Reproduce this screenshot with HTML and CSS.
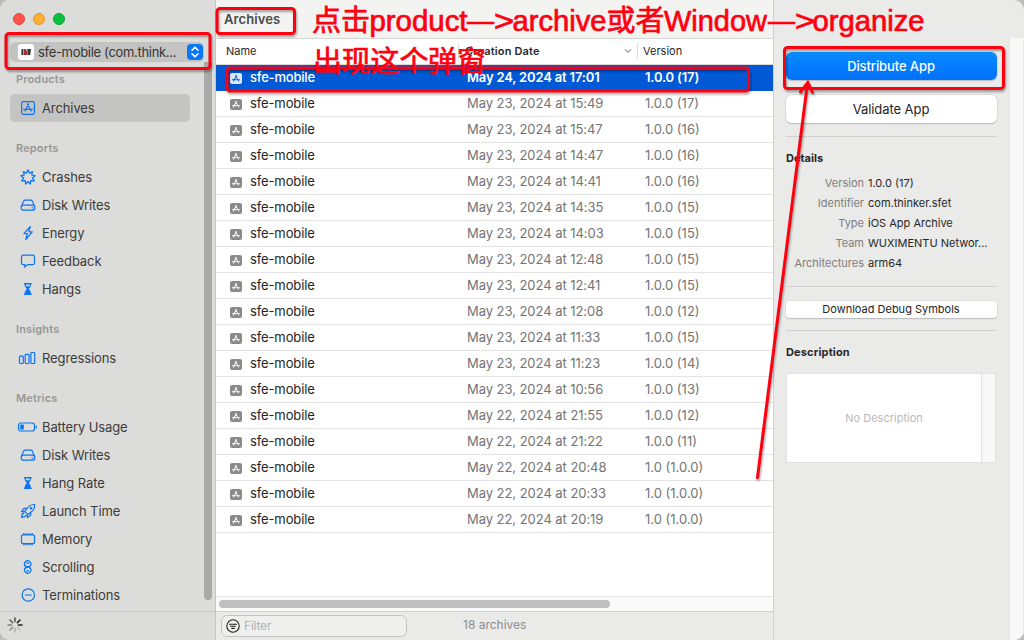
FILE: index.html
```html
<!DOCTYPE html>
<html lang="en">
<head>
<meta charset="utf-8">
<title>Archives</title>
<link rel="stylesheet" href="styles.css">
</head>
<body>
<svg class="defs" aria-hidden="true">
  <symbol id="app" viewBox="0 0 16 16"><rect x="1.6" y="1.6" width="12.8" height="12.8" rx="1.8"/><path d="M8.6 4 5 11M7.4 4l3.7 7M3.6 9.3h5.2M10.4 9.3h2"/></symbol>
  <symbol id="archive" viewBox="0 0 12 12"><rect width="12" height="11" rx="2" fill="currentColor"/><path class="mark" d="M6.4 2.3 3.4 8.4M5.6 2.3l3 6.1M2.1 6.7h4.6M8.3 6.7h1.6"/></symbol>
  <symbol id="crash" viewBox="0 0 16 16"><path d="m8 .8 1.5 3.4 3.1-1.6-.9 3.3 3.6.9-3 2.1 2 3-3.6-.3-.4 3.5L8 12.5l-2.3 2.6-.4-3.5-3.6.3 2-3-3-2.1 3.6-.9-.9-3.3 3.1 1.6z"/></symbol>
  <symbol id="disk" viewBox="0 0 16 16"><path d="M1.4 9.3 3.6 4.2Q4 3.1 5.1 3.1h5.8q1.1 0 1.5 1.1l2.2 5.1"/><rect x="1.2" y="8.2" width="13.6" height="5" rx="2.3"/><path d="M12 10.8h.8"/></symbol>
  <symbol id="bolt" viewBox="0 0 16 16"><path d="M10.3 1.5 3.9 8.7h3.5l-1.6 5.8 6.5-7.7H8.8z"/></symbol>
  <symbol id="chat" viewBox="0 0 16 16"><path d="M3.3 2.2h9.4q1.8 0 1.8 1.8v5.8q0 1.8-1.8 1.8H7.6L4.8 14v-2.4H3.3q-1.8 0-1.8-1.8V4q0-1.8 1.8-1.8z"/></symbol>
  <symbol id="glass" viewBox="0 0 16 16"><path class="solid" d="M4 2h7.6v1.5h-.7c0 2.4-1.2 3.2-2.1 4.5.9 1.3 2.1 2.1 2.1 4.4h.7V14H4v-1.6h.7c0-2.3 1.2-3.1 2.1-4.4-.9-1.3-2.1-2.1-2.1-4.5H4z"/><path class="hole" d="M5.8 3.6h4q0 1-.5 1.7h-3q-.5-.7-.5-1.7z"/></symbol>
  <symbol id="bars" viewBox="0 0 18 16"><rect x="1.5" y="6.1" width="3.8" height="7.4" rx=".8"/><rect x="7.2" y="4.3" width="3.8" height="9.2" rx=".8"/><rect x="12.9" y="2.5" width="3.8" height="11" rx=".8"/></symbol>
  <symbol id="battery" viewBox="0 0 20 16"><rect x="1.500" y="4" width="16" height="8" rx="2.2"/><rect class="solid" x="3.200" y="5.6" width="3.6" height="4.8" rx=".6"/><path d="M19.200 7v2"/></symbol>
  <symbol id="rocket" viewBox="0 0 16 16"><path d="M14.6 1.5C10.6 1.2 7.4 3.8 4.8 8.6l2.7 2.8c4.6-2.3 7.5-5.6 7.1-9.9zM7 5.3H4L1.5 8.7l3.3-.1M10.8 9.2v2.9l-3.4 2.5.1-3.2M3.8 10.2Q1.6 10.8 1.7 14.4q3.2 0 4.4-2"/><circle class="solid" cx="11" cy="5.2" r="1.2"/></symbol>
  <symbol id="memory" viewBox="0 0 16 16"><rect x="1.5" y="3.8" width="13" height="8.8" rx="1.4"/><path d="M3.8 2.500v1M5.9 2.500v1M8 2.500v1M10.1 2.500v1M12.2 2.500v1M3.8 12.8v1M5.9 12.8v1M8 12.8v1M10.1 12.8v1M12.2 12.8v1"/></symbol>
  <symbol id="scroll" viewBox="0 0 16 16"><path d="M5.2 7.1A3.2 3.2 0 1 1 10.2 7M5.2 9A3.2 3.2 0 1 0 10.2 9"/><path d="m4.8 6.5 3 2.1 2.7-2.1M4.8 9.5l3-2.1 2.7 2.1M6.6 4.2h2M6.6 11.8h2"/></symbol>
  <symbol id="minus" viewBox="0 0 16 16"><circle cx="8.3" cy="8" r="6.2"/><path d="M5.3 8h6"/></symbol>
</svg>
<div class="window">
  <aside class="sidebar">
    <div class="lights"><i class="red"></i><i class="amber"></i><i class="green"></i></div>
    <div class="picker">
      <svg class="logo" viewBox="0 0 16 16"><rect width="16" height="16" rx="3" fill="#fff"/><path d="M3.500 5h2L4.900 11H3.300zM10.200 5h2.800l-.8 6h-2.800z" fill="#333"/><path d="M6 5h1.800l.6 2.6L9 5h1l-.8 6H5.300z" fill="#a92c30"/></svg>
      <span class="picker-name">sfe-mobile (com.think...</span>
      <svg class="stepper" viewBox="0 0 16 16"><rect width="16" height="16" rx="4"/><path d="m5 6.2 3-3 3 3M5 9.8l3 3 3-3"/></svg>
    </div>
    <nav class="nav">
      <h2 class="first">Products</h2>
      <a class="item current"><svg><use href="#app"/></svg><span>Archives</span></a>
      <h2>Reports</h2>
      <a class="item"><svg><use href="#crash"/></svg><span>Crashes</span></a>
      <a class="item"><svg><use href="#disk"/></svg><span>Disk Writes</span></a>
      <a class="item"><svg><use href="#bolt"/></svg><span>Energy</span></a>
      <a class="item"><svg><use href="#chat"/></svg><span>Feedback</span></a>
      <a class="item"><svg><use href="#glass"/></svg><span>Hangs</span></a>
      <h2>Insights</h2>
      <a class="item"><svg class="w18"><use href="#bars"/></svg><span>Regressions</span></a>
      <h2>Metrics</h2>
      <a class="item"><svg class="w20"><use href="#battery"/></svg><span>Battery Usage</span></a>
      <a class="item"><svg><use href="#disk"/></svg><span>Disk Writes</span></a>
      <a class="item"><svg><use href="#glass"/></svg><span>Hang Rate</span></a>
      <a class="item"><svg><use href="#rocket"/></svg><span>Launch Time</span></a>
      <a class="item"><svg><use href="#memory"/></svg><span>Memory</span></a>
      <a class="item"><svg><use href="#scroll"/></svg><span>Scrolling</span></a>
      <a class="item"><svg><use href="#minus"/></svg><span>Terminations</span></a>
      <div class="side-thumb"></div>
    </nav>
    <div class="side-foot">
      <svg class="spinner" viewBox="-8 -8 16 16"><path d="M0-3.4V-7" opacity=".75"/><path d="m2.4-2.4 2.6-2.6"/><path d="M3.4 0H7"/><path d="m2.4 2.4 2.6 2.6" opacity=".15"/><path d="M0 3.4V7" opacity=".25"/><path d="m-2.4 2.4-2.6 2.6" opacity=".4"/><path d="M-3.4 0H-7" opacity=".5"/><path d="m-2.4-2.4-2.6-2.6" opacity=".65"/></svg>
    </div>
  </aside>
  <main class="main">
    <header class="title">Archives</header>
    <div class="columns"><span class="c-name">Name</span><span class="c-date">Creation Date<svg viewBox="0 0 8 6"><path d="m1 1.3 3 3 3-3"/></svg></span><span class="c-version">Version</span></div>
    <div class="rows">
      <div class="row selected"><svg><use href="#archive"/></svg><span class="n">sfe-mobile</span><span class="d">May 24, 2024 at 17:01</span><span class="v">1.0.0 (17)</span></div>
      <div class="row"><svg><use href="#archive"/></svg><span class="n">sfe-mobile</span><span class="d">May 23, 2024 at 15:49</span><span class="v">1.0.0 (17)</span></div>
      <div class="row"><svg><use href="#archive"/></svg><span class="n">sfe-mobile</span><span class="d">May 23, 2024 at 15:47</span><span class="v">1.0.0 (16)</span></div>
      <div class="row"><svg><use href="#archive"/></svg><span class="n">sfe-mobile</span><span class="d">May 23, 2024 at 14:47</span><span class="v">1.0.0 (16)</span></div>
      <div class="row"><svg><use href="#archive"/></svg><span class="n">sfe-mobile</span><span class="d">May 23, 2024 at 14:41</span><span class="v">1.0.0 (16)</span></div>
      <div class="row"><svg><use href="#archive"/></svg><span class="n">sfe-mobile</span><span class="d">May 23, 2024 at 14:35</span><span class="v">1.0.0 (15)</span></div>
      <div class="row"><svg><use href="#archive"/></svg><span class="n">sfe-mobile</span><span class="d">May 23, 2024 at 14:03</span><span class="v">1.0.0 (15)</span></div>
      <div class="row"><svg><use href="#archive"/></svg><span class="n">sfe-mobile</span><span class="d">May 23, 2024 at 12:48</span><span class="v">1.0.0 (15)</span></div>
      <div class="row"><svg><use href="#archive"/></svg><span class="n">sfe-mobile</span><span class="d">May 23, 2024 at 12:41</span><span class="v">1.0.0 (15)</span></div>
      <div class="row"><svg><use href="#archive"/></svg><span class="n">sfe-mobile</span><span class="d">May 23, 2024 at 12:08</span><span class="v">1.0.0 (12)</span></div>
      <div class="row"><svg><use href="#archive"/></svg><span class="n">sfe-mobile</span><span class="d">May 23, 2024 at 11:33</span><span class="v">1.0.0 (15)</span></div>
      <div class="row"><svg><use href="#archive"/></svg><span class="n">sfe-mobile</span><span class="d">May 23, 2024 at 11:23</span><span class="v">1.0.0 (14)</span></div>
      <div class="row"><svg><use href="#archive"/></svg><span class="n">sfe-mobile</span><span class="d">May 23, 2024 at 10:56</span><span class="v">1.0.0 (13)</span></div>
      <div class="row"><svg><use href="#archive"/></svg><span class="n">sfe-mobile</span><span class="d">May 22, 2024 at 21:55</span><span class="v">1.0.0 (12)</span></div>
      <div class="row"><svg><use href="#archive"/></svg><span class="n">sfe-mobile</span><span class="d">May 22, 2024 at 21:22</span><span class="v">1.0.0 (11)</span></div>
      <div class="row"><svg><use href="#archive"/></svg><span class="n">sfe-mobile</span><span class="d">May 22, 2024 at 20:48</span><span class="v">1.0 (1.0.0)</span></div>
      <div class="row"><svg><use href="#archive"/></svg><span class="n">sfe-mobile</span><span class="d">May 22, 2024 at 20:33</span><span class="v">1.0 (1.0.0)</span></div>
      <div class="row"><svg><use href="#archive"/></svg><span class="n">sfe-mobile</span><span class="d">May 22, 2024 at 20:19</span><span class="v">1.0 (1.0.0)</span></div>
    </div>
    <div class="hscroll"><div class="hthumb"></div></div>
    <footer class="foot">
      <div class="filter"><svg viewBox="0 0 14 14"><circle cx="7" cy="7" r="6.2"/><path d="M3.5 5.2h7M4.6 7.3h4.8M5.8 9.4h2.4"/></svg><span>Filter</span></div>
      <span class="count">18 archives</span>
    </footer>
  </main>
  <section class="inspector">
    <div class="panel">
      <button class="btn primary">Distribute App</button>
      <button class="btn validate">Validate App</button>
      <hr class="rule">
      <h3 class="details-title">Details</h3>
      <dl class="details">
        <dt>Version</dt><dd>1.0.0 (17)</dd>
        <dt>Identifier</dt><dd>com.thinker.sfet</dd>
        <dt>Type</dt><dd>iOS App Archive</dd>
        <dt>Team</dt><dd>WUXIMENTU Networ...</dd>
        <dt>Architectures</dt><dd>arm64</dd>
      </dl>
      <hr class="rule">
      <button class="btn small">Download Debug Symbols</button>
      <hr class="rule last">
      <h3 class="desc-title">Description</h3>
      <div class="desc"><span>No Description</span><i></i></div>
    </div>
    <div class="gutter"></div>
  </section>
  <svg class="notes" viewBox="0 0 1024 640">
    <g class="strokes">
      <rect x="6" y="33.500" width="204" height="35" rx="3"/>
      <rect x="217" y="8.500" width="77.500" height="25" rx="3"/>
      <rect x="227" y="68" width="521.500" height="23" rx="3"/>
      <rect x="784.500" y="47.500" width="219" height="41" rx="3"/>
      <path d="M757.500 477.500 807.500 83M800.500 92l7.300-9.500 4.700 9.800"/>
    </g>
    <g class="words">
      <text x="312" y="31" textLength="58">点击</text><text x="369.500" y="31" textLength="98" lengthAdjust="spacingAndGlyphs">product</text><text x="467" y="31" textLength="27" lengthAdjust="spacingAndGlyphs">—</text><text x="494" y="31" textLength="20" lengthAdjust="spacingAndGlyphs">&gt;</text><text x="512.500" y="31" textLength="94" lengthAdjust="spacingAndGlyphs">archive</text><text x="606.500" y="31" textLength="58">或者</text><text x="664" y="31" textLength="103" lengthAdjust="spacingAndGlyphs">Window</text><text x="768" y="31" textLength="27" lengthAdjust="spacingAndGlyphs">—</text><text x="795" y="31" textLength="20" lengthAdjust="spacingAndGlyphs">&gt;</text><text x="812.500" y="31" textLength="112" lengthAdjust="spacingAndGlyphs">organize</text>
      <text x="313" y="72" textLength="173">出现这个弹窗</text>
    </g>
  </svg>
</div>
</body>
</html>
```
FILE: styles.css
```css
* { box-sizing: border-box; }
body { margin: 0; background: #bdbdbd; font-family: Inter, "Noto Sans CJK SC", sans-serif; font-size: 13px; color: #272727; }
.defs { position: absolute; width: 0; height: 0; }
.window { position: relative; display: flex; width: 1024px; height: 640px; overflow: hidden; border-radius: 10px; background: #eaeae9; }

.sidebar { display: flex; flex-direction: column; width: 216px; flex: none; background: #dcdcda; border-right: 1px solid #c4c4c2; }
.lights { display: flex; gap: 8px; padding: 13px 0 0 13px; height: 42px; flex: none; }
.lights i { width: 12px; height: 12px; border-radius: 50%; border: 1px solid #dd4742; background: #fe514e; }
.lights .amber { background: #fdb035; border-color: #dc952a; }
.lights .green { background: #0bc03f; border-color: #0ca338; }
.picker { display: flex; align-items: center; height: 20px; width: 194px; margin-left: 10px; padding: 0 1px 0 8px; background: #c3c3c1; border-radius: 5px; flex: none; }
.logo { width: 16px; height: 16px; margin-right: 4px; }
.picker-name { flex: 1; white-space: nowrap; color: #353535; letter-spacing: -.31px; }
.stepper { width: 16px; height: 16px; }
.stepper rect { fill: #0878f6; }
.stepper path { fill: none; stroke: #fff; stroke-width: 1.6; stroke-linecap: round; stroke-linejoin: round; }
.nav { position: relative; flex: 1; padding-left: 10px; }
.nav h2 { margin: 0; height: 41px; padding: 11px 0 0 6px; line-height: 30px; font-size: 11px; font-weight: 600; color: #979796; letter-spacing: .15px; }
.nav .first { height: 32px; padding-top: 2px; }
.item { display: flex; align-items: center; width: 180px; height: 28px; padding-left: 10px; border-radius: 5px; color: #3b3b3a; letter-spacing: -.1px; }
.item svg { width: 16px; height: 16px; margin-right: 6px; fill: none; stroke: #0a74f5; stroke-width: 1.2; stroke-linejoin: round; stroke-linecap: round; flex: none; }
.item .w18 { width: 18px; margin-left: -2px; }
.item .w20 { width: 20px; margin-left: -3px; margin-right: 5px; }
.solid { fill: #0a74f5; stroke: none; }
.hole { fill: #dcdcda; stroke: none; }
.current { background: #c4c4c2; }
.side-thumb { position: absolute; right: 3px; top: 0; width: 8px; height: 538px; background: #a9a9a8; border-radius: 0 0 4px 4px; }
.side-foot { height: 29px; border-top: 1px solid #c4c4c2; padding: 5px 0 0 7px; }
.spinner { width: 16px; height: 16px; stroke: #222; stroke-width: 1.5; stroke-linecap: round; }

.main { display: flex; flex-direction: column; width: 557px; flex: none; background: #fff; }
.title { height: 39px; padding: 0 0 0 8px; line-height: 39px; font-weight: 600; letter-spacing: .1px; color: #4a4a4a; background: #f3f3f1; border-bottom: 1px solid #d5d5d4; }
.columns { display: flex; align-items: center; height: 26px; padding-bottom: 1px; font-size: 11px; border-bottom: 1px solid #dadada; }
.c-name { width: 243px; padding-left: 10px; line-height: 16px; border-right: 1px solid #dcdcdc; }
.c-date { display: flex; align-items: center; justify-content: space-between; width: 179px; padding: 0 5px 0 6px; line-height: 16px; font-weight: 600; letter-spacing: .15px; border-right: 1px solid #dcdcdc; }
.c-date svg { width: 8px; height: 6px; fill: none; stroke: #666; }
.c-version { padding-left: 5px; }
.rows { flex: 1; }
.row { --mark: #fff; display: flex; align-items: center; height: 26px; padding-bottom: 1px; border-bottom: 1px solid #e4e4e4; color: #747474; white-space: nowrap; }
.row svg { width: 12px; height: 12px; margin: 3px 8px 0 14px; color: #8a8a8a; }
.mark { fill: none; stroke: var(--mark); stroke-width: 1; }
.row .n { width: 217px; color: #242424; letter-spacing: -.12px; }
.row .d { width: 178px; letter-spacing: -.05px; }
.selected, .selected .n { color: #fff; font-weight: 500; }
.selected { --mark: #0259d6; background: #0259d6; border-color: #0259d6; }
.selected .n { letter-spacing: -.2px; }
.selected .d, .selected .v { font-weight: 600; letter-spacing: -.17px; }
.row.selected svg { color: #dce8fa; }
.hscroll { height: 15px; padding: 3px; border-top: 1px solid #e2e2e2; background: #fafafa; }
.hthumb { width: 391px; height: 8px; border-radius: 4px; background: #c0c0c0; }
.foot { display: flex; height: 29px; padding: 3px 0 0 5px; border-top: 1px solid #d0d0cf; background: #eaeae8; }
.filter { display: flex; align-items: center; gap: 4px; width: 186px; height: 22px; padding: 0 0 1px 4px; border: 1px solid #c3c3c2; border-radius: 6px; background: #efefee; color: #b3b3b3; font-size: 12px; letter-spacing: -.2px; }
.filter svg { width: 14px; height: 14px; fill: none; stroke: #1f1f1f; stroke-width: 1.1; stroke-linecap: round; }
.count { padding-left: 56px; line-height: 19px; font-size: 12px; color: #8d8d8c; }

.inspector { display: flex; flex: 1; border-left: 1px solid #d0d0cf; }
.panel { display: flex; flex-direction: column; width: 235px; padding: 52px 0 0 12px; }
.btn { width: 211px; height: 28px; flex: none; padding: 0 1px 1px 0; border: 0; border-radius: 6px; font: 13px Inter, sans-serif; letter-spacing: -.07px; color: #242424; background: #fff; box-shadow: 0 0 0 .5px #d0d0d0, 0 1px 1px #aaa; }
.primary { color: #fff; font-weight: 500; background: linear-gradient(#098aff, #0071fb); letter-spacing: -.1px; }
.validate { margin-top: 15px; }
.rule { width: 211px; height: 1px; margin: 13px 0 0; border: 0; background: #d0d0cf; flex: none; }
.panel h3 { margin: 0; font-size: 11px; line-height: 16px; font-weight: 700; }
.panel .details-title { margin-top: 13px; }
.details { display: grid; grid-template-columns: 78px 1fr; grid-auto-rows: 20px; column-gap: 4px; margin: 7px 0 0; line-height: 20px; font-size: 11px; height: 100px; white-space: nowrap; }
.details dt { justify-self: end; color: #7e7e7d; }
.details dd { margin: 0; }
.details + .rule { margin-top: 13px; }
.small { margin-top: 14px; height: 17px; border-radius: 4px; font-size: 11px; letter-spacing: 0; }
.panel .last { margin-top: 12px; }
.panel .desc-title { margin-top: 13px; letter-spacing: .15px; }
.desc { display: flex; width: 210px; height: 90px; margin-top: 13px; border: 1px solid #e0e0df; background: #fff; font-size: 11px; color: #b9b9b9; }
.desc span { flex: 1; text-align: center; line-height: 89px; }
.desc i { width: 14px; background: #f8f8f8; border-left: 1px solid #e0e0df; }
.gutter { width: 15px; margin-top: 38px; background: #f8f8f8; border-left: 1px solid #e2e2e1; border-right: 1px solid #e8e8e8; }

.notes { position: absolute; left: 0; top: 0; width: 1024px; height: 640px; pointer-events: none; }
.strokes { fill: none; stroke: #ff0010; stroke-width: 3; stroke-linecap: round; filter: drop-shadow(1px 2px 1px rgba(0, 0, 0, .35)); }
.words { fill: #ff0010; stroke: #ff0010; stroke-width: .7; font: 29px "Liberation Sans", "Noto Sans CJK SC", sans-serif; }
```
